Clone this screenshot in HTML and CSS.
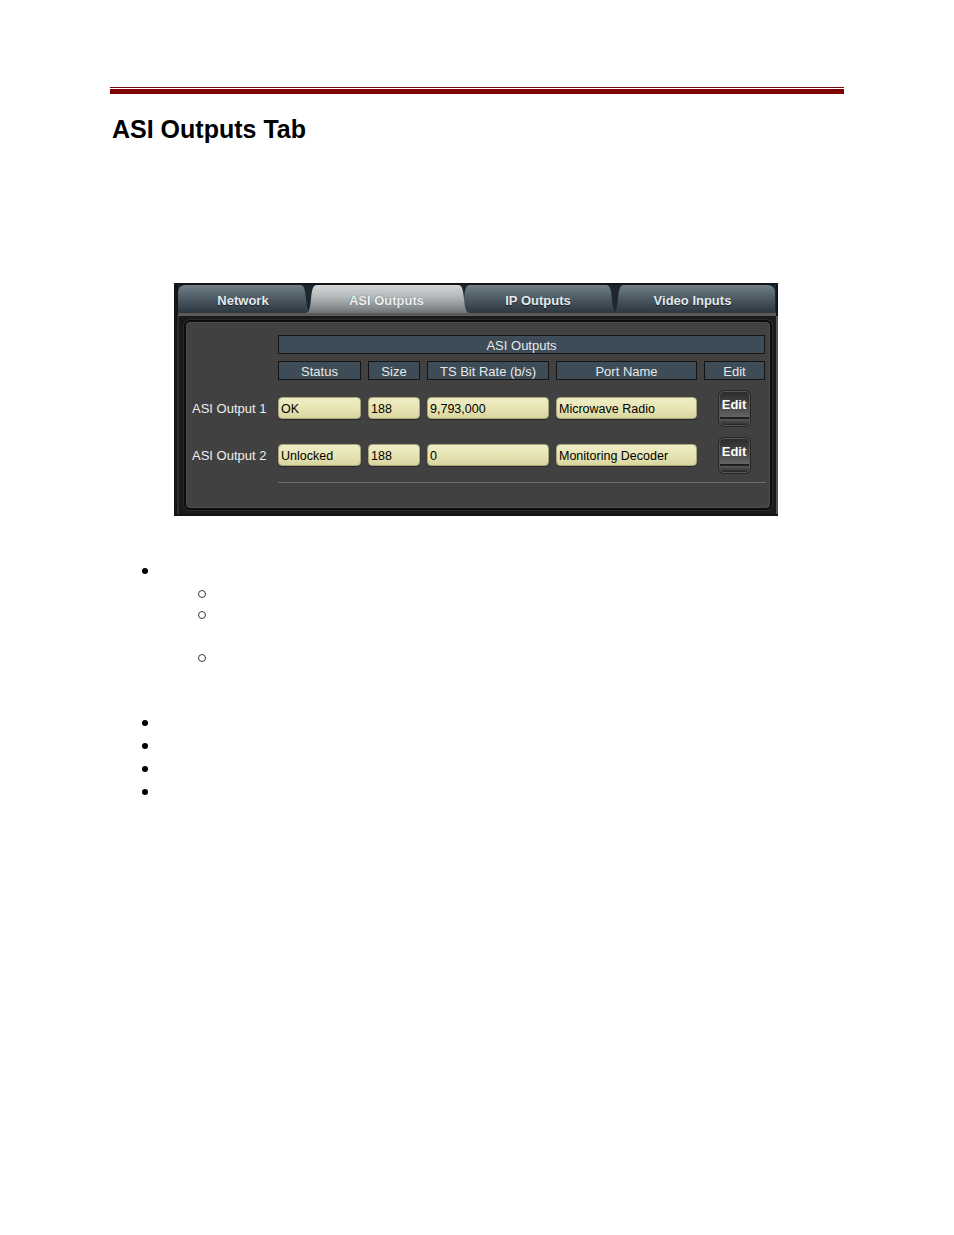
FILE: index.html
```html
<!DOCTYPE html>
<html>
<head>
<meta charset="utf-8">
<title>ASI Outputs Tab</title>
<link rel="stylesheet" href="styles.css">
</head>
<body>
<div class="page">
  <div class="rule-thin"></div>
  <div class="rule-thick"></div>
  <h1 class="title">ASI Outputs Tab</h1>

  <div class="shot">
    <div class="tabs">
      <div class="tab tab-network">Network</div>
      <div class="tab tab-asi active">ASI Outputs</div>
      <div class="tab tab-ip">IP Outputs</div>
      <div class="tab tab-video">Video Inputs</div>
    </div>
    <div class="tab-rule"></div>
    <div class="frame">
      <div class="panel">
        <div class="grid-row head-row">
          <div class="hcell span-all">ASI Outputs</div>
        </div>
        <div class="grid-row colhead-row">
          <div></div>
          <div class="hcell">Status</div>
          <div class="hcell">Size</div>
          <div class="hcell">TS Bit Rate (b/s)</div>
          <div class="hcell">Port Name</div>
          <div class="hcell">Edit</div>
        </div>
        <div class="grid-row data-row first">
          <div class="label">ASI Output 1</div>
          <div class="field">OK</div>
          <div class="field">188</div>
          <div class="field">9,793,000</div>
          <div class="field">Microwave Radio</div>
          <div class="edit-cell"><span class="edit-btn" role="button">Edit</span></div>
        </div>
        <div class="grid-row data-row second">
          <div class="label">ASI Output 2</div>
          <div class="field">Unlocked</div>
          <div class="field">188</div>
          <div class="field">0</div>
          <div class="field">Monitoring Decoder</div>
          <div class="edit-cell"><span class="edit-btn" role="button">Edit</span></div>
        </div>
        <div class="divider"></div>
      </div>
    </div>
  </div>

  <div class="bullets">
    <div class="bi h23"><span class="dot"></span></div>
    <div class="bi h21"><span class="ring"></span></div>
    <div class="bi h43"><span class="ring"></span></div>
    <div class="bi h65"><span class="ring"></span></div>
    <div class="bi h23"><span class="dot"></span></div>
    <div class="bi h23"><span class="dot"></span></div>
    <div class="bi h23"><span class="dot"></span></div>
    <div class="bi h23"><span class="dot"></span></div>
  </div>
</div>
</body>
</html>
```

FILE: styles.css
```css
* { box-sizing: border-box; }

html, body {
  margin: 0;
  padding: 0;
  background: #ffffff;
}

body {
  font-family: "Liberation Sans", Arial, sans-serif;
  color: #000;
}

.page {
  padding-top: 87px;
}

.rule-thin {
  margin-left: 110px;
  width: 734px;
  height: 1px;
  background: #7c0a0a;
}

.rule-thick {
  margin-left: 110px;
  width: 734px;
  height: 5px;
  margin-top: 1px;
  background: #800000;
}

.title {
  margin: 21px 0 0 112px;
  font-size: 25px;
  line-height: 28px;
  font-weight: bold;
}

/* ---------- screenshot ---------- */
.shot {
  margin: 140px 0 0 174px;
  width: 604px;
  background: #151515;
  padding: 2px 2px 2px 4px;
}

.tabs {
  display: flex;
  height: 28px;
  background: #1f272c;
}

.tab {
  height: 28px;
  line-height: 31px;
  text-align: center;
  font-weight: bold;
  font-size: 13px;
  color: #e3eaee;
  text-shadow: 0 1px 1px rgba(0, 0, 0, 0.6);
  background: linear-gradient(#6f7e88 0%, #56646e 35%, #3e4b54 70%, #2c373f 100%);
  position: relative;
}

.tab-network {
  width: 134px;
  clip-path: path('M0 28 L0 8 Q0 0 8 0 L122 0 C126 0 127 4 128 14 C129 24 130 28 134 28 Z');
  padding-right: 4px;
}

.tab-asi {
  width: 165px;
  margin-left: -7px;
  z-index: 2;
  padding-right: 2px;
  color: #eef2f4;
  text-shadow: 0 0 1px rgba(60, 60, 60, 0.8);
  background: linear-gradient(#d3d6d7 0%, #b6babc 40%, #8f9497 75%, #6c7174 100%);
  clip-path: path('M0 28 C4 28 5 24 6 14 C7 4 8 0 12 0 L153 0 C157 0 158 4 159 14 C160 24 161 28 165 28 Z');
}

.tab-ip {
  width: 160px;
  margin-left: -12px;
  z-index: 1;
  padding-right: 0;
  clip-path: path('M0 28 C4 28 5 24 6 14 C7 4 8 0 12 0 L148 0 C152 0 153 4 154 14 C155 24 156 28 160 28 Z');
}

.tab-video {
  width: 163px;
  margin-left: -6px;
  padding-right: 2px;
  clip-path: path('M0 28 C4 28 5 24 6 14 C7 4 8 0 12 0 L155 0 Q163 0 163 8 L163 28 Z');
}

.tab-rule {
  height: 3px;
  background: #5a5a5a;
}

.frame {
  background: #1a1a1a;
  padding: 4px 4px 4px 6px;
  border-left: 2px solid #2c2c2c;
  border-right: 2px solid #555;
  margin-right: -2px;
  margin-left: -1px;
}

.panel {
  margin-left: -1px;
  background: #414141;
  border: 2px solid #0c0c0c;
  border-radius: 6px;
  box-shadow: inset 0 0 0 1px #4c4c4c, 0 0 0 1px #2a2a2a;
  padding: 13px 4px 25px 6px;
}

.grid-row {
  display: grid;
  grid-template-columns: 79px 83px 52px 122px 141px 61px;
  column-gap: 7px;
}

.hcell {
  height: 19px;
  line-height: 19px;
  border: 1px solid #141414;
  background: #3d4c56;
  color: #e6e9eb;
  font-size: 13px;
  text-align: center;
}

.span-all {
  grid-column: 2 / 7;
}

.colhead-row {
  margin-top: 7px;
}

.data-row {
  height: 36px;
  align-items: center;
}

.data-row.first { margin-top: 10px; }
.data-row.second { margin-top: 11px; }

.label {
  color: #eeeeee;
  font-size: 13px;
  white-space: nowrap;
}

.field {
  height: 22px;
  line-height: 22px;
  border: 1px solid #a9a67a;
  border-radius: 4px;
  background: linear-gradient(#efedc6 0%, #e5e2b0 60%, #d9d5a0 100%);
  box-shadow: 0 1px 1px rgba(0, 0, 0, 0.35);
  color: #000;
  font-size: 12.5px;
  padding-left: 2px;
  white-space: nowrap;
  overflow: hidden;
}

.edit-cell {
  display: flex;
  justify-content: center;
  padding-right: 1px;
}

.edit-btn {
  display: block;
  width: 31px;
  height: 35px;
  padding-top: 5px;
  border: 1px solid #565656;
  border-radius: 5px;
  box-shadow: 0 0 0 1px #262626;
  background: linear-gradient(#2a2a2a 0%, #363636 15%, #4c4c4c 50%, #646464 75%, #1c1c1c 77%, #1c1c1c 80%, #545454 83%, #3a3a3a 95%, #202020 100%);
  color: #ffffff;
  font-weight: bold;
  font-size: 13px;
  line-height: 16px;
  text-align: center;
  cursor: pointer;
}

.divider {
  margin-top: 9px;
  margin-left: 86px;
  height: 1px;
  background: #6e6e6e;
}

/* ---------- bullets ---------- */
.bullets {
  margin-top: 45px;
}

.bi {
  display: flex;
  align-items: flex-start;
}

.h21 { height: 21px; }
.h23 { height: 23px; }
.h43 { height: 43px; }
.h65 { height: 65px; }

.dot {
  display: block;
  width: 6px;
  height: 6px;
  margin: 7px 0 0 142px;
  border-radius: 50%;
  background: #000;
}

.ring {
  display: block;
  width: 8px;
  height: 8px;
  margin: 6px 0 0 198px;
  border-radius: 50%;
  border: 1px solid #3a3a3a;
}
```
